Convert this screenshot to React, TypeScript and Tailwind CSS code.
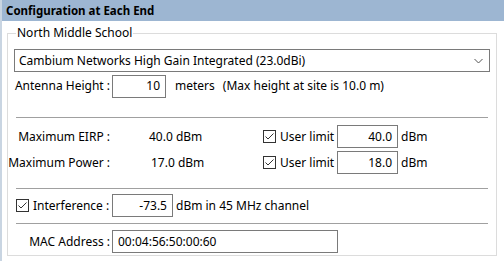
import React from "react";

const Check = () => (
  <span className="inline-flex w-[13px] h-[13px] border border-[#333333] bg-white items-center justify-center shrink-0">
    <svg width="11" height="11" viewBox="0 0 11 11">
      <polyline points="1.5,5.5 4,8 9.5,2.5" fill="none" stroke="#333333" strokeWidth="1" />
    </svg>
  </span>
);

const Field = ({ value, className, align = "right" }: { value: string; className: string; align?: "right" | "left" }) => (
  <div
    className={`h-[23px] border border-[#7a7a7a] bg-white flex items-center shrink-0 ${align === "right" ? "justify-end pr-[5px]" : "justify-start pl-[5px]"} ${className}`}
  >
    {value}
  </div>
);

const Label = ({ children }: { children: React.ReactNode }) => (
  <div className="w-[96px] shrink-0 flex justify-end whitespace-nowrap">
    <span>{children}</span>
  </div>
);

export default function App() {
  return (
    <div
      className="w-[504px] h-[261px] bg-white border-l-2 border-[#c9d5e2] text-[12px] text-black overflow-hidden whitespace-nowrap"
      style={{ fontFamily: '"Noto Sans", "Open Sans", sans-serif' }}
    >
      <div className="h-[21px] bg-[#9db6d2] flex items-center pl-[4px] font-bold text-[11.5px]">
        Configuration at Each End
      </div>
      <div className="relative mt-[12px] ml-[5px] w-[490px] h-[223px] border border-[#dcdcdc]">
        <div className="absolute -top-[9px] left-[8px] bg-white px-[1px] leading-[16px]">North Middle School</div>
        <div className="flex flex-col px-[6px] pt-[15px]">
          <div className="h-[23px] border border-[#7a7a7a] flex items-center pl-[4px] justify-between pr-[6px]">
            <span>Cambium Networks High Gain Integrated (23.0dBi)</span>
            <svg width="9" height="6" viewBox="0 0 9 6">
              <polyline points="0.5,1 4.5,5 8.5,1" fill="none" stroke="#555555" strokeWidth="1" />
            </svg>
          </div>
          <div className="mt-[3px] h-[22px] flex items-center">
            <Label>Antenna Height :</Label>
            <Field value="10" className="ml-[2px] w-[54px] h-[22px]" />
            <span className="ml-[9px]">meters</span>
            <span className="ml-[8px]">(Max height at site is 10.0 m)</span>
          </div>
          <div className="mt-[20px] mx-[2px] h-px bg-[#a0a0a0]" />
          <div className="mt-[7px] h-[23px] flex items-center">
            <Label>Maximum EIRP :</Label>
            <div className="ml-[39px] w-[114px] shrink-0">40.0 dBm</div>
            <Check />
            <span className="ml-[4px] w-[53px] shrink-0">User limit</span>
            <Field value="40.0" className="ml-[4px] w-[61px]" />
            <span className="ml-[3px]">dBm</span>
          </div>
          <div className="mt-[3px] h-[23px] flex items-center">
            <Label>Maximum Power :</Label>
            <div className="ml-[41px] w-[112px] shrink-0">17.0 dBm</div>
            <Check />
            <span className="ml-[4px] w-[53px] shrink-0">User limit</span>
            <Field value="18.0" className="ml-[4px] w-[61px]" />
            <span className="ml-[3px]">dBm</span>
          </div>
          <div className="mt-[14px] mx-[2px] h-px bg-[#a0a0a0]" />
          <div className="mt-[5px] h-[23px] flex items-center">
            <div className="w-[96px] shrink-0 flex items-center pl-[2px]">
              <Check />
              <span className="ml-[4px]">Interference :</span>
            </div>
            <Field value="-73.5" className="ml-[2px] w-[61px]" />
            <span className="ml-[3px]">dBm in 45 MHz channel</span>
          </div>
          <div className="mt-[6px] mx-[2px] h-px bg-[#a0a0a0]" />
          <div className="mt-[6px] h-[23px] flex items-center">
            <Label>MAC Address :</Label>
            <Field value="00:04:56:50:00:60" align="left" className="ml-[2px] w-[226px]" />
          </div>
        </div>
      </div>
    </div>
  );
}
